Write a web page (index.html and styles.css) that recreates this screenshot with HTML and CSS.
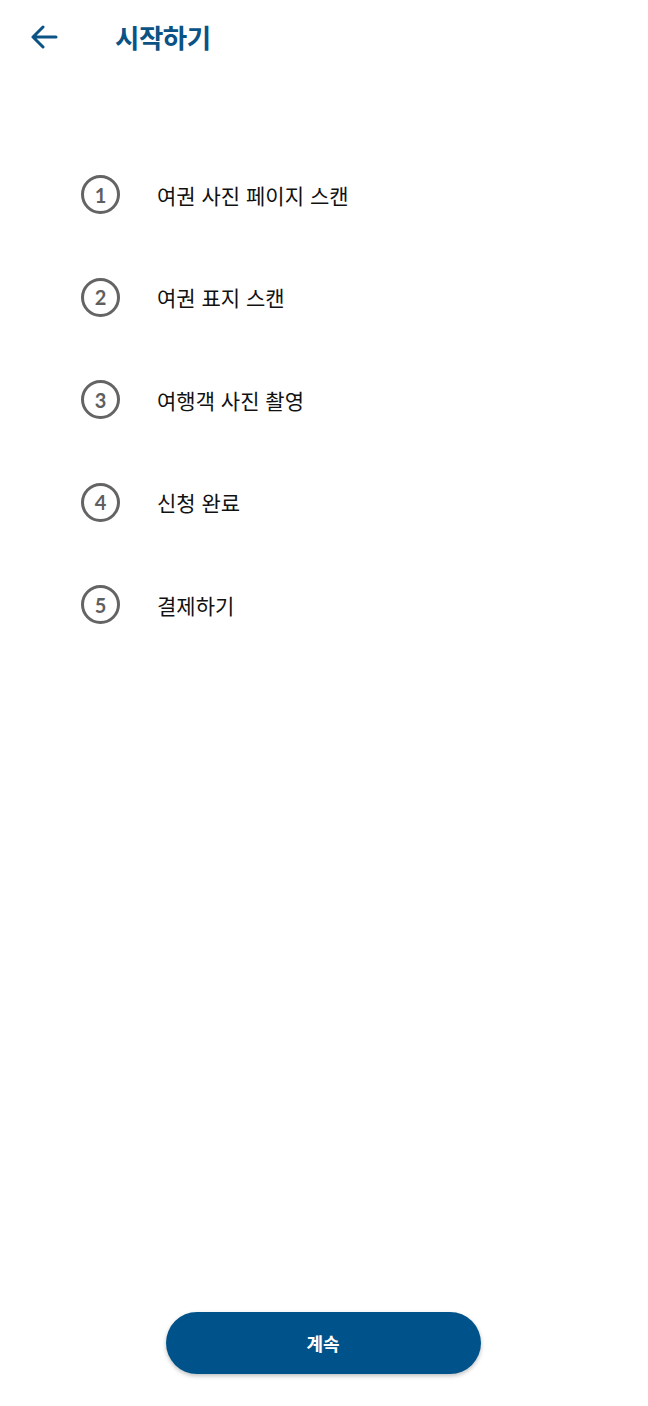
FILE: index.html
```html
<!DOCTYPE html>
<html lang="ko">
<head>
<meta charset="UTF-8">
<meta name="viewport" content="width=device-width, initial-scale=1.0">
<title>시작하기</title>
<link rel="stylesheet" href="styles.css">
</head>
<body>
<div class="screen">
  <header class="topbar">
    <button class="back" aria-label="뒤로">
      <svg width="28" height="24" viewBox="0 0 28 24">
        <path d="M26 12H3M13 2L3 12l10 10" fill="none" stroke="#0b5285" stroke-width="3" stroke-linecap="round" stroke-linejoin="round"/>
      </svg>
    </button>
    <h1 class="title">시작하기</h1>
  </header>

  <ol class="steps">
    <li class="step"><span class="num">1</span><span class="label">여권 사진 페이지 스캔</span></li>
    <li class="step"><span class="num">2</span><span class="label">여권 표지 스캔</span></li>
    <li class="step"><span class="num">3</span><span class="label">여행객 사진 촬영</span></li>
    <li class="step"><span class="num">4</span><span class="label">신청 완료</span></li>
    <li class="step"><span class="num">5</span><span class="label">결제하기</span></li>
  </ol>

  <div class="footer">
    <button class="continue">계속</button>
  </div>
</div>
</body>
</html>
```

FILE: styles.css
```css
body {
  margin: 0;
  background: #fff;
  font-family: "Noto Sans CJK KR", "Noto Sans", sans-serif;
}
.screen {
  display: flex;
  flex-direction: column;
  height: 1406px;
}
.topbar {
  display: flex;
  align-items: center;
  height: 73px;
  padding-left: 30px;
}
.back {
  background: none;
  border: none;
  padding: 0;
  width: 30px;
  height: 24px;
  display: flex;
  align-items: center;
  cursor: pointer;
}
.title {
  margin: 0 0 0 55px;
  font-size: 26.5px;
  font-weight: 700;
  color: #0b5285;
  letter-spacing: -0.5px;
}
.steps {
  list-style: none;
  margin: 0;
  padding: 102px 0 0 81px;
  display: flex;
  flex-direction: column;
  gap: 63.5px;
}
.step {
  display: flex;
  align-items: center;
  height: 39px;
}
.num {
  box-sizing: border-box;
  width: 39px;
  height: 39px;
  border: 3px solid #646464;
  border-radius: 50%;
  display: flex;
  align-items: center;
  justify-content: center;
  font-family: "Lato", sans-serif;
  font-size: 20px;
  font-weight: 700;
  color: #5f5f5f;
}
.label {
  margin-left: 37px;
  font-size: 21px;
  color: #111;
  letter-spacing: 0;
}
.footer {
  margin-top: auto;
  display: flex;
  justify-content: center;
  padding-bottom: 32px;
}
.continue {
  width: 315px;
  height: 62px;
  margin-right: 2px;
  border: none;
  border-radius: 31px;
  background: #00538a;
  color: #fff;
  font-family: "Noto Sans CJK KR", sans-serif;
  font-size: 18px;
  font-weight: 700;
  box-shadow: 0 2px 4px rgba(0, 0, 0, 0.25);
  cursor: pointer;
}
```
